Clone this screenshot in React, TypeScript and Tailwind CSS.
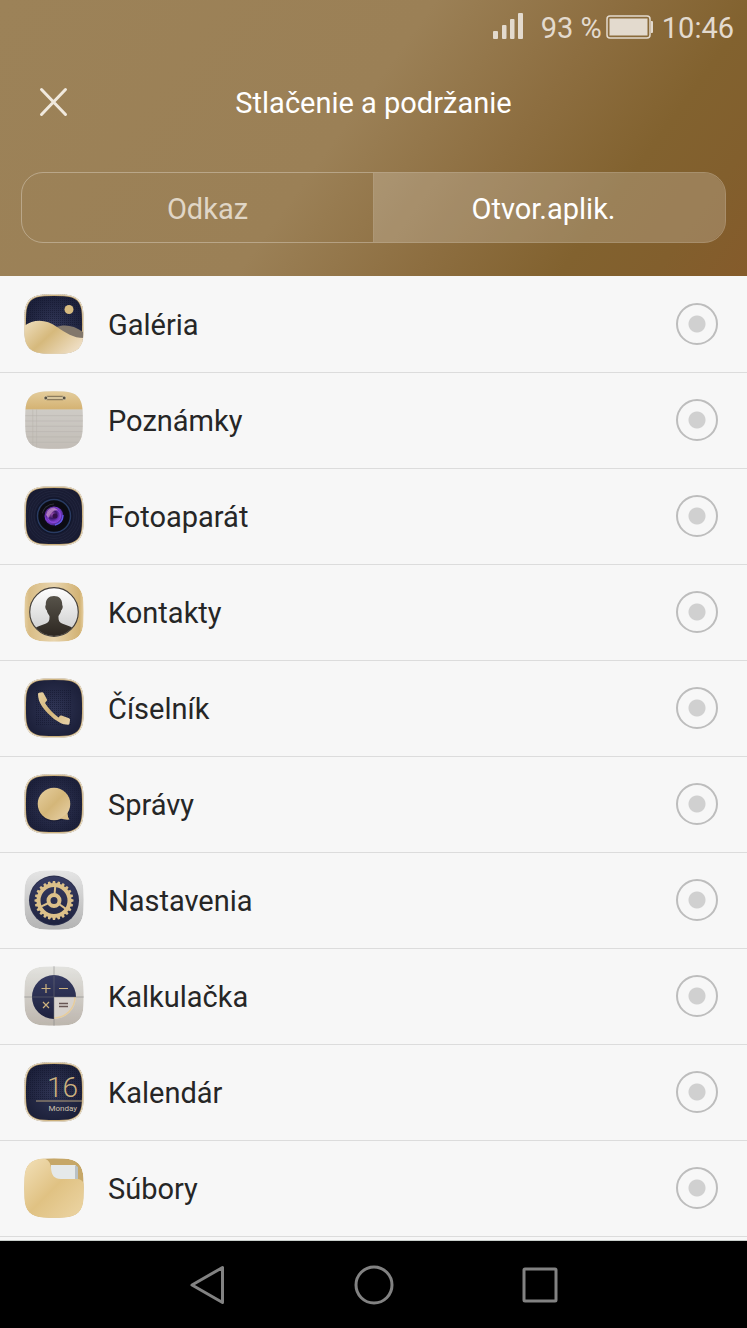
import { useState, type ReactNode } from "react";

type Tab = "link" | "app";

const SQUIRCLE =
  "M20 .5Q30 0 40 .5C53 1 59 7 59.5 20Q60 30 59.5 40C59 53 53 59 40 59.5Q30 60 20 59.5C7 59 1 53 .5 40Q0 30 .5 20C1 7 7 1 20 .5Z";

const apps: { id: string; label: string; icon: ReactNode }[] = [
  { id: "gallery", label: "Galéria", icon: <GalleryIcon /> },
  { id: "notes", label: "Poznámky", icon: <NotesIcon /> },
  { id: "camera", label: "Fotoaparát", icon: <CameraIcon /> },
  { id: "contacts", label: "Kontakty", icon: <ContactsIcon /> },
  { id: "dialer", label: "Číselník", icon: <DialerIcon /> },
  { id: "messages", label: "Správy", icon: <MessagesIcon /> },
  { id: "settings", label: "Nastavenia", icon: <SettingsIcon /> },
  { id: "calculator", label: "Kalkulačka", icon: <CalculatorIcon /> },
  { id: "calendar", label: "Kalendár", icon: <CalendarIcon /> },
  { id: "files", label: "Súbory", icon: <FilesIcon /> },
];

export default function App() {
  const [tab, setTab] = useState<Tab>("app");
  const [selected, setSelected] = useState<string | null>(null);

  return (
    <div className="flex min-h-screen flex-col bg-[#f7f7f7] font-['Roboto','Noto_Sans',sans-serif] text-[29px] leading-9">
      <IconDefs />

      <header className="bg-[linear-gradient(126deg,#9c8258_0%,#9b8056_46%,#8d6e40_65%,#82622f_80%,#825f2d_90%,#855b2b_100%)] px-[21px] pb-[33px] text-white">
        <StatusBar />
        <div className="grid h-24 grid-cols-[66px_1fr_66px] items-center">
          <button type="button" aria-label="Zavrieť" className="flex justify-center text-[#f0e9de]">
            <svg width="30" height="30" viewBox="0 0 30 30" fill="none" stroke="currentColor" strokeWidth="3" strokeLinecap="round">
              <path d="M2.500 2.500 26.500 27.500M26.500 2.500 2.500 27.500" />
            </svg>
          </button>
          <h1 className="pt-0.5 text-center">Stlačenie a podržanie</h1>
        </div>

        <div
          role="tablist"
          className="mt-[22px] grid h-[71px] grid-cols-[1fr_1px_1fr] overflow-hidden rounded-[22px] border border-white/30"
        >
          <TabButton active={tab === "link"} onClick={() => setTab("link")} className="pl-5">
            Odkaz
          </TabButton>
          <div className="bg-white/25" />
          <TabButton active={tab === "app"} onClick={() => setTab("app")} className="pr-3">
            Otvor.aplik.
          </TabButton>
        </div>
      </header>

      <ul className="flex-1 border-b border-[#c9cfcb] pt-px text-[#262626]">
        {apps.map((app) => (
          <li key={app.id} className="border-b border-[#dcdcdc]">
            <label htmlFor={app.id} className="flex h-[95px] items-center gap-6 pr-[29px] pb-px pl-6">
              {app.icon}
              <span className="flex-1 pt-0.5">{app.label}</span>
              <input
                id={app.id}
                type="radio"
                name="app"
                checked={selected === app.id}
                onChange={() => setSelected(app.id)}
                className="size-[42px] appearance-none rounded-full border-2 border-[#bdbdbd] bg-[radial-gradient(circle,#d0d0d0_8px,transparent_9px)] checked:border-[#9b8056] checked:bg-[radial-gradient(circle,#9b8056_8px,transparent_9px)]"
              />
            </label>
          </li>
        ))}
      </ul>

      <NavBar />
    </div>
  );
}

function StatusBar() {
  return (
    <div className="-mr-2 flex h-[54px] items-center justify-end text-[#e3dace]">
      <svg className="mr-4" width="32" height="28" viewBox="0 0 32 28" fill="currentColor">
        <rect x="0" y="18" width="5" height="8" rx="1" />
        <rect x="9" y="12" width="4.500" height="14" rx="1" />
        <rect x="17" y="6" width="4.500" height="20" rx="1" />
        <rect x="25" y="0" width="5" height="26" rx="1" />
      </svg>
      <span className="pt-px">93 %</span>
      <svg className="mx-1" width="48" height="24" viewBox="0 0 48 24">
        <rect x="1" y="1" width="43" height="22" rx="3" fill="none" stroke="currentColor" strokeWidth="1.500" />
        <rect x="3.500" y="3.500" width="38" height="17" fill="currentColor" />
        <path d="M45 6h1q1 0 1 1v10q0 1-1 1h-1z" fill="currentColor" />
      </svg>
      <span className="ml-1 pt-px">10:46</span>
    </div>
  );
}

function TabButton({
  active,
  onClick,
  className,
  children,
}: {
  active: boolean;
  onClick: () => void;
  className: string;
  children: ReactNode;
}) {
  return (
    <button
      type="button"
      role="tab"
      aria-selected={active}
      onClick={onClick}
      className={`pt-0.5 ${className} ${active ? "bg-white/20 text-white" : "text-[#e0d6c6]"}`}
    >
      {children}
    </button>
  );
}

function NavBar() {
  return (
    <nav className="h-[87px] bg-black text-[#828282]">
      <div className="mx-auto grid h-full w-2/3 grid-cols-3">
        <NavButton label="Späť">
          <path d="M4 20 34.500 2.500V37.500Z" />
        </NavButton>
        <NavButton label="Domov">
          <circle cx="20" cy="20" r="18" />
        </NavButton>
        <NavButton label="Posledné aplikácie">
          <rect x="4" y="4" width="32" height="32" rx="1" />
        </NavButton>
      </div>
    </nav>
  );
}

function NavButton({ label, children }: { label: string; children: ReactNode }) {
  return (
    <button type="button" aria-label={label} className="flex items-center justify-center">
      <svg width="40" height="40" viewBox="0 0 40 40" fill="none" stroke="currentColor" strokeWidth="3" strokeLinejoin="round">
        {children}
      </svg>
    </button>
  );
}

// Gradients and patterns shared by all app icons
function IconDefs() {
  return (
    <svg width="0" height="0" className="absolute" aria-hidden="true">
      <defs>
        <linearGradient id="gold" x1="0" y1="0" x2="1" y2="1">
          <stop offset="0" stopColor="#e6cfa0" />
          <stop offset=".5" stopColor="#d4b679" />
          <stop offset="1" stopColor="#e8d2aa" />
        </linearGradient>
        <linearGradient id="goldDown" x1="0" y1="0" x2="0" y2="1">
          <stop offset="0" stopColor="#e4cd9c" />
          <stop offset="1" stopColor="#d4b273" />
        </linearGradient>
        <linearGradient id="sand" x1="0" y1="0" x2="1" y2=".6">
          <stop offset="0" stopColor="#efdfbf" />
          <stop offset=".5" stopColor="#d6b97c" />
          <stop offset="1" stopColor="#eddcc0" />
        </linearGradient>
        <linearGradient id="folder" x1="0" y1="0" x2="1" y2="1">
          <stop offset="0" stopColor="#f2e0b8" />
          <stop offset=".5" stopColor="#e0c283" />
          <stop offset="1" stopColor="#ecd5a5" />
        </linearGradient>
        <linearGradient id="contactFrame" x1="0" y1="0" x2="1" y2="0">
          <stop offset="0" stopColor="#e6d0a4" />
          <stop offset=".08" stopColor="#d9bd86" />
          <stop offset=".5" stopColor="#e8d4ac" />
          <stop offset=".93" stopColor="#d2b274" />
          <stop offset="1" stopColor="#e6d0a4" />
        </linearGradient>
        <radialGradient id="navy">
          <stop offset="0" stopColor="#303555" />
          <stop offset="1" stopColor="#1d213b" />
        </radialGradient>
        <linearGradient id="navyDown" x1="0" y1="0" x2="0" y2="1">
          <stop offset="0" stopColor="#373c62" />
          <stop offset="1" stopColor="#1f2340" />
        </linearGradient>
        <linearGradient id="silver" x1="0" y1="0" x2="0" y2="1">
          <stop offset="0" stopColor="#e5e5e5" />
          <stop offset="1" stopColor="#b3b3b3" />
        </linearGradient>
        <linearGradient id="stone" x1="0" y1="0" x2="0" y2="1">
          <stop offset="0" stopColor="#e3e3df" />
          <stop offset="1" stopColor="#bdb6ae" />
        </linearGradient>
        <linearGradient id="white" x1="0" y1="0" x2="0" y2="1">
          <stop offset="0" stopColor="#ffffff" />
          <stop offset="1" stopColor="#c9c9c9" />
        </linearGradient>
        <linearGradient id="person" x1="0" y1="0" x2="0" y2="1">
          <stop offset="0" stopColor="#57534a" />
          <stop offset="1" stopColor="#2c2620" />
        </linearGradient>
        <radialGradient id="lens" cx=".4" cy=".4" r=".65">
          <stop offset="0" stopColor="#9a4fb0" />
          <stop offset=".35" stopColor="#3b1868" />
          <stop offset=".65" stopColor="#7d3cd0" />
          <stop offset="1" stopColor="#33206e" />
        </radialGradient>
        <pattern id="dots" width="2" height="2" patternUnits="userSpaceOnUse">
          <rect width="1" height="1" fill="#10142c" opacity=".55" />
        </pattern>
        <clipPath id="squircle">
          <path d={SQUIRCLE} />
        </clipPath>
        <clipPath id="contactCircle">
          <circle cx="30" cy="30" r="24" />
        </clipPath>
      </defs>
    </svg>
  );
}

function Icon({ fill, children }: { fill: string; children: ReactNode }) {
  return (
    <svg className="size-[60px] shrink-0" viewBox="0 0 60 60" aria-hidden="true">
      <g clipPath="url(#squircle)">
        <path d={SQUIRCLE} fill={fill} />
        {children}
      </g>
    </svg>
  );
}

function GoldRim() {
  return (
    <>
      <path d={SQUIRCLE} fill="none" stroke="#cdb17c" strokeWidth="3.400" />
      <path d={SQUIRCLE} fill="none" stroke="#ece6dc" strokeWidth="1.600" />
    </>
  );
}

function GalleryIcon() {
  return (
    <Icon fill="url(#navy)">
      <rect width="60" height="32" fill="url(#dots)" />
      <GoldRim />
      <circle cx="45" cy="15.500" r="4.500" fill="#d7bb80" />
      <path d="M32 33C40 30 50 31 59 38V46H40Z" fill="#82776b" />
      <path d="M0 32C10 25 22 25 33 33C42 39 49 44 60 44V60H0Z" fill="url(#sand)" />
    </Icon>
  );
}

function NotesIcon() {
  return (
    <svg className="size-[60px] shrink-0" viewBox="0 0 60 60" aria-hidden="true">
      <g transform="translate(1 1) scale(.967)" clipPath="url(#squircle)">
        <rect width="60" height="60" fill="url(#stone)" />
        <rect y="19" width="60" height="41" fill="#c6c2bd" opacity=".55" />
        <rect width="60" height="19" fill="url(#goldDown)" />
        <path d="M0 25.500H60M0 31H60M0 36.500H60M0 42H60M0 47.500H60M0 53H60" stroke="#b3afa9" strokeWidth=".5" />
        <path d="M8 19V60M12 19V60" stroke="#b8b3ac" strokeWidth=".5" />
        <rect x="21" y="5.500" width="20" height="3.500" rx="1.700" fill="#d7c59c" stroke="#6d6048" strokeWidth=".9" />
        <circle cx="21.500" cy="7.200" r="1.900" fill="#574f40" stroke="#eee0bd" strokeWidth=".6" />
        <circle cx="40.500" cy="7.200" r="1.900" fill="#574f40" stroke="#eee0bd" strokeWidth=".6" />
      </g>
    </svg>
  );
}

function CameraIcon() {
  return (
    <Icon fill="#191c33">
      <g fill="none" stroke="#252942" strokeWidth=".7">
        <circle cx="30" cy="30" r="20" />
        <circle cx="30" cy="30" r="22.500" />
        <circle cx="30" cy="30" r="25" />
        <circle cx="30" cy="30" r="27.500" />
      </g>
      <GoldRim />
      <circle cx="30" cy="30" r="18.500" fill="#11162b" />
      <circle cx="30" cy="30" r="16.500" fill="#0b0c12" stroke="#293b62" strokeWidth="1.500" />
      <path d="M18 27A12.500 12.500 0 0 1 30 17.500L30 24L23 30Z" fill="#3b3f44" opacity=".8" />
      <circle cx="30" cy="30" r="11.500" fill="#0d0b18" />
      <circle cx="30" cy="30" r="9.500" fill="url(#lens)" />
      <circle cx="30" cy="30" r="6.500" fill="none" stroke="#8a48dc" strokeWidth="1" />
      <path d="M22 29Q23 22 30 21.500L34 24Q27 24 25 32Z" fill="#c592c9" opacity=".75" />
      <path d="M31 39Q39 37 39 29" fill="none" stroke="#6259e8" strokeWidth="1.300" />
      <circle cx="31" cy="30" r="2.500" fill="#34104c" />
    </Icon>
  );
}

function ContactsIcon() {
  return (
    <Icon fill="url(#contactFrame)">
      <circle cx="30" cy="30" r="24.500" fill="url(#white)" />
      <path
        clipPath="url(#contactCircle)"
        d="M30 14C35.500 14 38.500 17.500 38.200 23C39.300 24 38.500 27.500 37.300 28C36.800 31 35.500 32.500 34.500 34C34.300 38.500 35 40 38 41.500L46 44.500C49 45.500 50 47 50 55H10C10 47 11 45.500 14 44.500L22 41.500C25 40 25.700 38.500 25.500 34C24.500 32.500 23.200 31 22.700 28C21.500 27.500 20.700 24 21.800 23C21.500 17.500 24.500 14 30 14Z"
        fill="url(#person)"
      />
      <circle cx="30" cy="30" r="24.300" fill="none" stroke="#47413a" strokeWidth="1.200" />
    </Icon>
  );
}

function DialerIcon() {
  return (
    <Icon fill="url(#navy)">
      <rect x="12" y="12" width="36" height="36" fill="url(#dots)" />
      <GoldRim />
      <path
        d="M14 16Q14 15 15 14.800L18 14.200Q19 14 19.500 15L23 21.500Q23.300 22.500 22.500 23L21 25Q26 33 34.500 39.500L36 37.800Q36.500 37.300 37.500 37.500L45 40.200Q46.200 40.700 46 42L45.500 45.500Q45.300 46.700 44 46.700C41 46.700 38.500 46 36.500 45Q29.500 41.500 24 35.500Q17.500 29 15 22.500Q14 19 14 16Z"
        fill="url(#gold)"
      />
    </Icon>
  );
}

function MessagesIcon() {
  return (
    <Icon fill="url(#navy)">
      <rect width="60" height="60" fill="url(#dots)" opacity=".6" />
      <GoldRim />
      <circle cx="30" cy="31" r="16.500" fill="#0f1226" opacity=".5" />
      <circle cx="30" cy="30" r="16.300" fill="url(#gold)" />
      <path d="M43.500 39Q43.500 43 45.500 45.500Q41 46 36.500 44.500Z" fill="#dcc08a" />
    </Icon>
  );
}

function SettingsIcon() {
  const teeth = Array.from({ length: 24 }, (_, i) => i * 15);
  return (
    <Icon fill="url(#silver)">
      <circle cx="30" cy="30.500" r="25" fill="#2b2f4d" />
      <circle cx="30" cy="30.500" r="24" fill="url(#navyDown)" />
      <g fill="none" stroke="#dcc08a">
        <circle cx="30" cy="30.500" r="15.500" strokeWidth="4" />
        <circle cx="30" cy="30.500" r="5.500" strokeWidth="4" />
        {[5, 125, 245].map((a) => (
          <path key={a} d="M30 16V24" strokeWidth="2" transform={`rotate(${a} 30 30.500)`} />
        ))}
      </g>
      {teeth.map((a) => (
        <path key={a} d="M28.300 13.800L28.900 11H31.100L31.700 13.800Z" fill="#dcc08a" transform={`rotate(${a} 30 30.500)`} />
      ))}
    </Icon>
  );
}

function CalculatorIcon() {
  return (
    <Icon fill="url(#stone)">
      <path d="M30 9A22 22 0 0 1 52 31H30V53A22 22 0 0 1 30 9Z" fill="url(#navyDown)" />
      <path d="M30 31H52A22 22 0 0 1 30 53Z" fill="#d8d3cd" />
      <path d="M51 31A21 21 0 0 1 30 52" fill="none" stroke="#e6cc9c" strokeWidth="1.500" />
      <path d="M30 0V60M0 31H60" stroke="#77777a" strokeWidth=".8" opacity=".6" />
      <g fill="none" stroke="#cdb27f" strokeWidth="1.200">
        <path d="M17.500 22.500H26.500M22 18V27M35 22.500H44M19 36L25 42M25 36L19 42" />
      </g>
      <path d="M35 37.500H44M35 40.500H44" stroke="#675654" strokeWidth="1.300" />
    </Icon>
  );
}

function CalendarIcon() {
  return (
    <Icon fill="url(#navy)">
      <rect width="60" height="38" fill="url(#dots)" />
      <GoldRim />
      <text x="54" y="35" textAnchor="end" fill="#cdb27f" className="font-['Roboto',sans-serif] text-[28px] font-light">
        16
      </text>
      <path d="M12 39H58" stroke="#b5a07a" strokeWidth="1" />
      <text x="53" y="49" textAnchor="end" fill="#cfc3ae" className="font-['Roboto',sans-serif] text-[8px]">
        Monday
      </text>
    </Icon>
  );
}

function FilesIcon() {
  return (
    <Icon fill="#c6a768">
      <path d="M27 7H52V24H27Z" fill="#e5e9ea" />
      <path d="M51 7L54 9V23H51Z" fill="#b9c1c5" />
      <path d="M0 0H18C24 1 26.500 4 27 10C27.500 17 30 21 37 21H53Q58 21 60 26V60H0Z" fill="url(#folder)" />
    </Icon>
  );
}
